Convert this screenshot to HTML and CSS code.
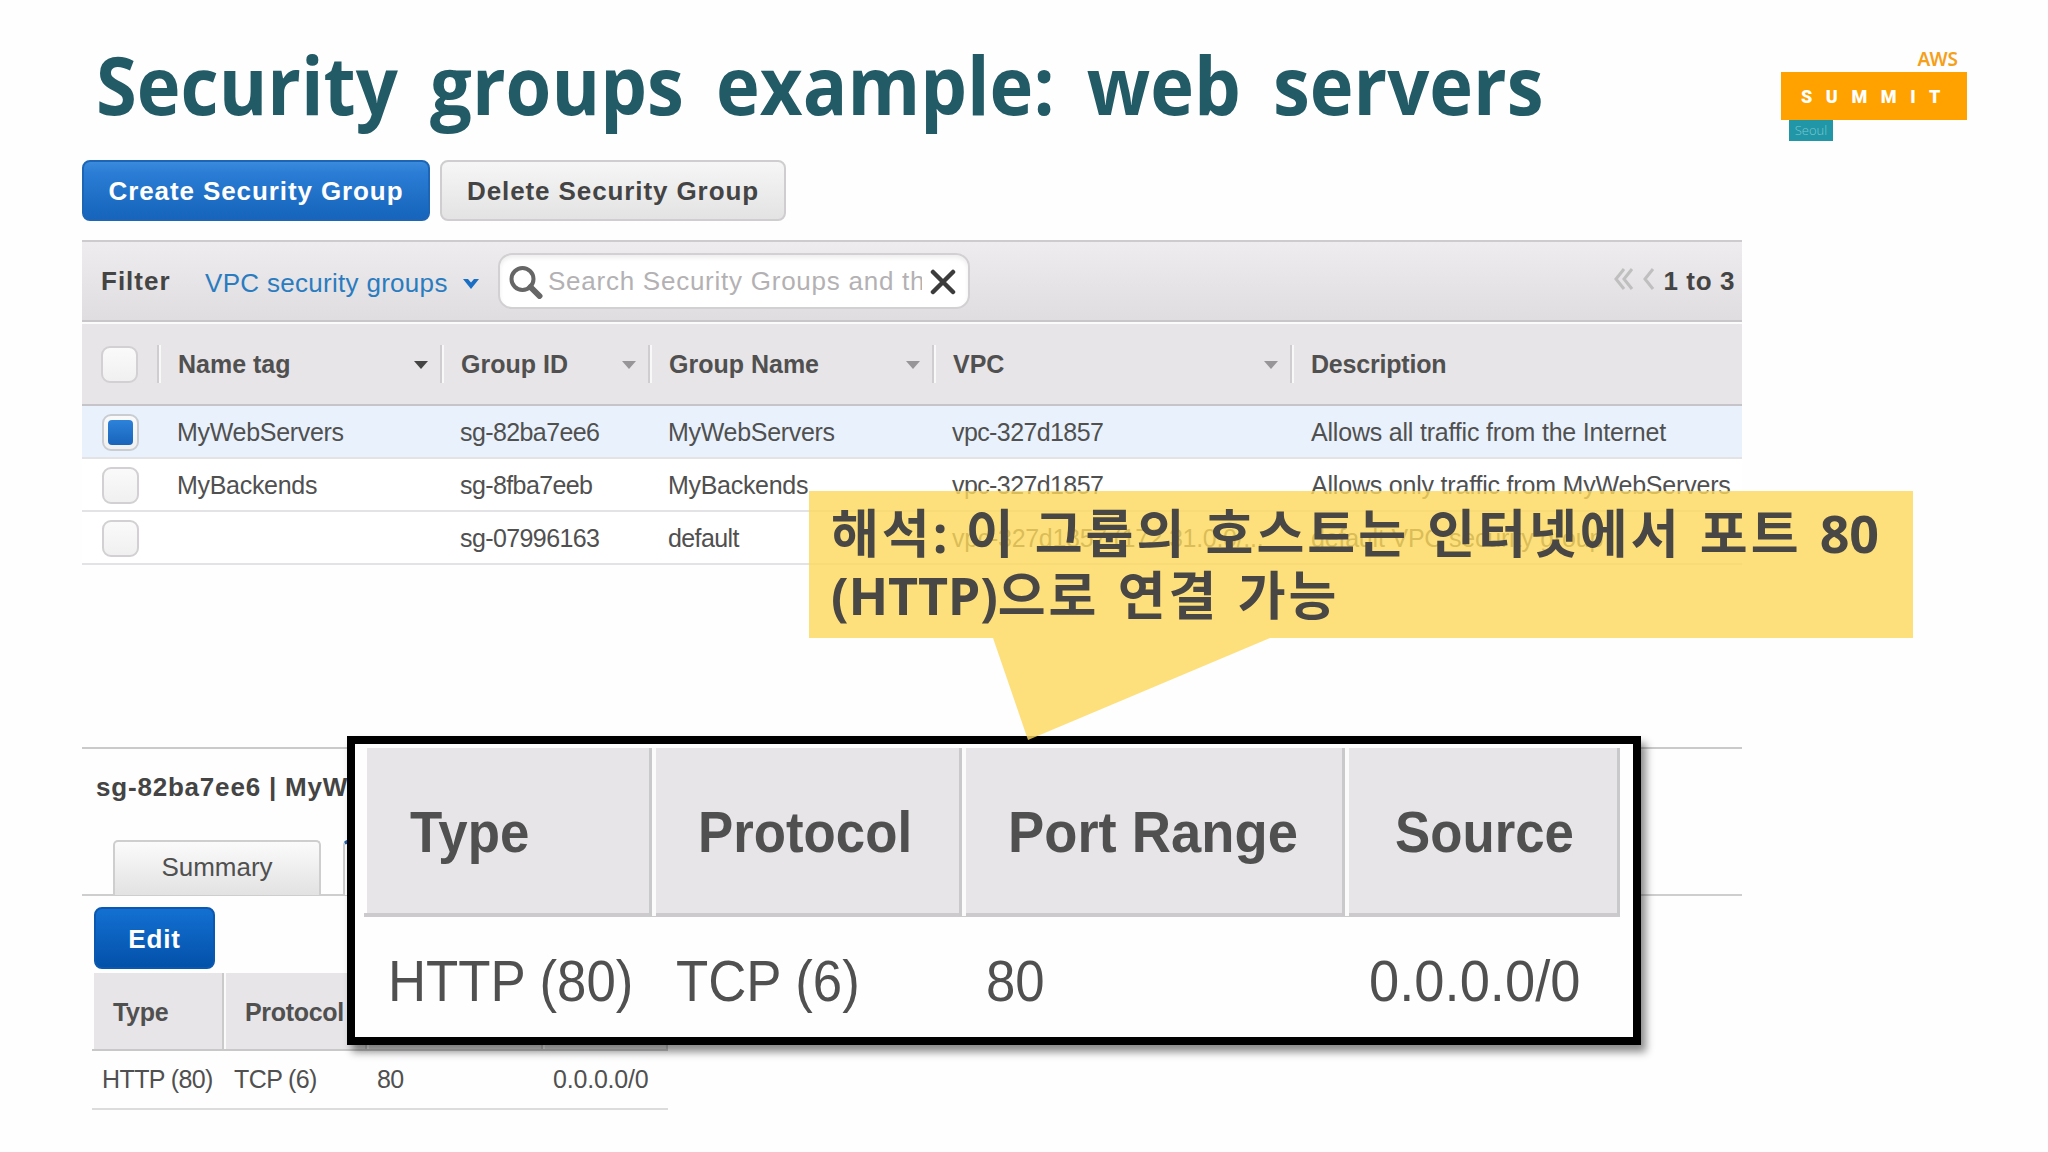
FILE: index.html
```html
<!DOCTYPE html>
<html lang="ko">
<head>
    <meta charset="UTF-8">
    <meta name="viewport" content="width=device-width, initial-scale=1.0">
    <title>Security groups example: web servers</title>
    <link rel="stylesheet" href="styles.css">
</head>
<body>
    <header class="slide-header">
        <h1>Security groups example: web servers</h1>
        <div class="logo">
            <span class="logo-aws">AWS</span>
            <span class="logo-summit">SUMMIT</span>
            <span class="logo-city">Seoul</span>
        </div>
    </header>

    <main class="console">
        <div class="actions">
            <button class="btn btn-primary">Create Security Group</button>
            <button class="btn btn-default">Delete Security Group</button>
        </div>

        <div class="filter-bar">
            <span class="filter-label">Filter</span>
            <span class="filter-link">VPC security groups</span>
            <svg class="chevron" width="16" height="12" viewBox="0 0 16 12"><path d="M0 1h5l3 3.500 3-3.500h5L8 11z" fill="#1a6fc4"/></svg>
            <div class="search">
                <svg width="34" height="34" viewBox="0 0 34 34" fill="none" stroke="#666"><circle cx="13.500" cy="14" r="11" stroke-width="4"/><path d="M21.500 22l9 9" stroke-width="6" stroke-linecap="round"/></svg>
                <span class="search-text">Search Security Groups and th</span>
                <svg width="26" height="26" viewBox="0 0 26 26" fill="none" stroke="#3c3c3c" stroke-width="4.500" stroke-linecap="round"><path d="M3 3l20 20M23 3L3 23"/></svg>
            </div>
            <div class="pager">
                <svg width="42" height="22" viewBox="0 0 42 22" fill="none" stroke="#bfbfbf" stroke-width="3"><path d="M11 1L3 11l8 10M19 1l-8 10 8 10M40 1l-8 10 8 10"/></svg>
                <span>1 to 3</span>
            </div>
        </div>

        <div class="grid grid-head">
            <div class="check-cell"><span class="checkbox"></span></div>
            <div class="sort active">Name tag</div>
            <div class="sort">Group ID</div>
            <div class="sort">Group Name</div>
            <div class="sort">VPC</div>
            <div>Description</div>
        </div>
        <div class="grid row selected">
            <div class="check-cell"><span class="checkbox checked"></span></div>
            <div>MyWebServers</div>
            <div class="tight">sg-82ba7ee6</div>
            <div>MyWebServers</div>
            <div class="tight">vpc-327d1857</div>
            <div class="desc">Allows all traffic from the Internet</div>
        </div>
        <div class="grid row">
            <div class="check-cell"><span class="checkbox"></span></div>
            <div>MyBackends</div>
            <div class="tight">sg-8fba7eeb</div>
            <div>MyBackends</div>
            <div class="tight">vpc-327d1857</div>
            <div class="desc">Allows only traffic from MyWebServers</div>
        </div>
        <div class="grid row">
            <div class="check-cell"><span class="checkbox"></span></div>
            <div></div>
            <div class="tight">sg-07996163</div>
            <div class="tight">default</div>
            <div>vpc-327d1857 (172.31.0.0/...</div>
            <div class="desc">default VPC security group</div>
        </div>

        <section class="detail">
            <div class="detail-title">sg-82ba7ee6 | MyWebServers</div>
            <div class="tabs">
                <span class="tab">Summary</span>
                <span class="tab tab-active"></span>
            </div>
            <button class="btn btn-edit">Edit</button>
            <div class="rules rules-head">
                <div>Type</div><div>Protocol</div><div></div><div></div>
            </div>
            <div class="rules rules-row">
                <div>HTTP (80)</div><div>TCP (6)</div><div>80</div><div class="source">0.0.0.0/0</div>
            </div>
        </section>
    </main>

    <!-- Enlarged copy of the inbound rules -->
    <div class="zoom-box">
        <div class="zoom-head">
            <div><span>Type</span></div>
            <div><span>Protocol</span></div>
            <div><span class="wide">Port Range</span></div>
            <div><span>Source</span></div>
        </div>
        <div class="zoom-row">
            <div><span>HTTP (80)</span></div>
            <div><span>TCP (6)</span></div>
            <div><span>80</span></div>
            <div><span class="wide">0.0.0.0/0</span></div>
        </div>
    </div>

    <div class="callout">
        <p>해석<span class="latin">:</span> 이 그룹의 호스트는 인터넷에서 포트 <span class="latin">80</span><br><span class="latin">(HTTP)</span>으로 연결 가능</p>
    </div>
</body>
</html>
```

FILE: styles.css
```css
* {
    box-sizing: border-box;
}
body {
    margin: 0;
    width: 2048px;
    height: 1152px;
    position: relative;
    overflow: hidden;
    background: #fefefe;
    color: #505050;
    font-family: "Liberation Sans", Arial, sans-serif;
    font-size: 25px;
}

/* Header */
.slide-header {
    display: flex;
    justify-content: space-between;
    height: 160px;
    padding: 23px 81px 0 96px;
}
h1 {
    margin: 0;
    font-family: "Open Sans", "Noto Sans", sans-serif;
    font-size: 80px;
    font-weight: bold;
    line-height: 121px;
    color: #225a66;
    white-space: nowrap;
    word-spacing: 14px;
    transform: scaleX(0.926);
    transform-origin: left;
}
.logo {
    display: flex;
    flex-direction: column;
    width: 186px;
    padding-top: 25px;
}
.logo-aws {
    align-self: flex-end;
    height: 24px;
    padding-right: 9px;
    font: 600 19px/22px "Noto Sans", sans-serif;
    color: #f5a01a;
}
.logo-summit {
    height: 48px;
    padding-left: 20px;
    background: #ffa200;
    color: #fff;
    font: 900 18px/50px Roboto, sans-serif;
    letter-spacing: 13.6px;
}
.logo-city {
    width: 44px;
    height: 21px;
    margin-left: 8px;
    background: #2096a6;
    color: #7cc8d0;
    font: 300 13px/20px "Open Sans", sans-serif;
    text-align: center;
}

/* Console */
.console {
    width: 1660px;
    margin-left: 82px;
}
.actions {
    display: flex;
    gap: 10px;
    height: 80px;
}
.btn {
    height: 61px;
    padding: 2px 0 0;
    border-radius: 8px;
    font-family: inherit;
    font-size: 26px;
    font-weight: bold;
    letter-spacing: 0.9px;
}
.btn-primary {
    width: 348px;
    border: 2px solid #1c66b5;
    background: linear-gradient(#3a8bdd, #2a7cd4 20%, #1664bb);
    color: #fff;
}
.btn-default {
    width: 346px;
    border: 2px solid #cfcdcf;
    background: linear-gradient(#f7f6f7, #e4e3e4);
    color: #444;
}
.filter-bar {
    display: flex;
    align-items: center;
    height: 82px;
    padding: 0 7px 0 19px;
    border-top: 2px solid #cdcbcd;
    border-bottom: 2px solid #c8c6c8;
    background: linear-gradient(#eeecee, #dfdddf);
    font-size: 26px;
}
.filter-label {
    width: 104px;
    padding-top: 1px;
    font-weight: bold;
    letter-spacing: 1px;
    color: #444;
}
.filter-link {
    width: 258px;
    padding-top: 5px;
    color: #2a7cc0;
    letter-spacing: 0.3px;
    white-space: nowrap;
}
.chevron {
    margin-top: 5px;
}
.search {
    display: flex;
    align-items: center;
    width: 472px;
    height: 56px;
    margin-left: 19px;
    padding: 0 11px 0 9px;
    border: 2px solid #d2d0d2;
    border-radius: 14px;
    background: #fff;
    box-shadow: inset 0 3px 4px #eee;
}
.search-text {
    width: 374px;
    margin: 1px 8px 0 5px;
    overflow: hidden;
    white-space: nowrap;
    color: #b3b1b3;
    letter-spacing: 0.75px;
}
.search svg {
    margin-top: 2px;
}
.pager {
    display: flex;
    align-items: center;
    gap: 8px;
    margin-left: auto;
    font-weight: bold;
    letter-spacing: 0.6px;
    color: #444;
}
.pager svg {
    margin-top: -4px;
}

.grid {
    display: grid;
    grid-template-columns: 76px 283px 208px 284px 358px 1fr;
    align-items: center;
    white-space: nowrap;
}
.grid-head {
    height: 84px;
    border-top: 2px solid #fbfbfb;
    border-bottom: 2px solid #c6c4c8;
    background: #e7e5e7;
    font-weight: bold;
}
.grid-head > div:not(.check-cell) {
    position: relative;
    left: -1px;
    display: flex;
    align-items: center;
    height: 38px;
    padding-left: 19px;
    border-left: 2px solid #cfcdcf;
    box-shadow: inset 2px 0 #f8f8f8;
}
.grid-head > div:last-child {
    letter-spacing: -0.2px;
}
.sort::after {
    content: "";
    margin: 2px 12px 0 auto;
    border: 7px solid transparent;
    border-top: 8px solid #979597;
    border-bottom: 0;
}
.sort.active::after {
    border-top-color: #444;
}
.check-cell {
    padding-left: 19px;
}
.checkbox {
    display: block;
    width: 37px;
    height: 37px;
    border: 2px solid #d2d0d2;
    border-radius: 9px;
    background: linear-gradient(#fbfafb, #f1f0f1);
}
.checked {
    border-color: #c9cdd2;
    padding: 4px;
}
.checked::before {
    content: "";
    display: block;
    width: 25px;
    height: 25px;
    border-radius: 4px;
    background: linear-gradient(#2d82da, #1864ba);
}
.row {
    height: 53px;
    border-bottom: 2px solid #e3e2e4;
    background: #fff;
    letter-spacing: -0.3px;
}
.row > div {
    padding: 1px 0 0 19px;
}
.row .check-cell {
    padding-left: 20px;
}
.row .tight {
    letter-spacing: -0.6px;
}
.row .desc {
    padding-left: 20px;
    letter-spacing: -0.2px;
}
.selected {
    background: #e9f2fc;
}

/* Detail pane */
.detail {
    margin-top: 182px;
    border-top: 2px solid #cbcacb;
}
.detail-title {
    height: 91px;
    padding: 23px 0 0 14px;
    font-size: 26px;
    font-weight: bold;
    letter-spacing: 0.8px;
    color: #444;
}
.tabs {
    display: flex;
    gap: 22px;
    height: 56px;
    padding-left: 31px;
    border-bottom: 2px solid #cfcecf;
}
.tab {
    width: 208px;
    height: 55px;
    border: 2px solid #cfcecf;
    border-bottom: 0;
    border-radius: 5px 5px 0 0;
    background: linear-gradient(#fbfbfb, #e3e2e3);
    font-size: 26px;
    line-height: 51px;
    text-align: center;
}
.tab-active {
    border-top: 4px solid #1f63b0;
    background: #fff;
}
.btn-edit {
    display: block;
    width: 121px;
    height: 62px;
    margin: 11px 0 4px 12px;
    border: 2px solid #0a58b0;
    background: linear-gradient(#1370d2, #0351a9);
    color: #fff;
}
.rules {
    display: grid;
    grid-template-columns: 132px 143px 176px 125px;
    align-items: center;
    width: 576px;
    margin-left: 10px;
}
.rules-head {
    height: 78px;
    border-bottom: 2px solid #c9c8c9;
    background: linear-gradient(to right, #fefefe 2px, #e7e5e7 2px);
    font-weight: bold;
    letter-spacing: -0.3px;
}
.rules-head > div {
    height: 76px;
    padding-left: 21px;
    border-right: 2px solid #cbcacb;
    line-height: 78px;
    box-shadow: 2px 0 #fafafa;
}
.rules-row {
    height: 59px;
    border-bottom: 2px solid #dddcdd;
    letter-spacing: -0.6px;
}
.rules-row > div {
    padding-left: 10px;
}
.rules-row .source {
    letter-spacing: -0.2px;
}

/* Enlarged table */
.zoom-box {
    position: absolute;
    left: 347px;
    top: 736px;
    width: 1294px;
    height: 309px;
    padding: 4px 13px 0 9px;
    border: 8px solid #000;
    background: #fefefe;
    box-shadow: 5px 7px 8px rgba(0, 0, 0, 0.45);
    font-size: 58px;
    white-space: nowrap;
}
.zoom-head,
.zoom-row {
    display: grid;
    grid-template-columns: 288px 310px 383px 275px;
}
.zoom-head {
    height: 169px;
    border-bottom: 4px solid #cccacc;
    background: linear-gradient(to right, #fefefe 3px, #e7e5e7 3px);
    font-weight: bold;
}
.zoom-head > div {
    padding-left: 46px;
    border-right: 3px solid #c9c8ca;
    box-shadow: 4px 0 #fbfbfb;
    line-height: 168px;
}
.zoom-head > div:last-child {
    box-shadow: none;
    padding-left: 50px;
}
.zoom-row {
    line-height: 127px;
}
.zoom-row > div {
    padding-left: 24px;
}
.zoom-box span {
    display: inline-block;
    transform: scaleX(0.91);
    transform-origin: left;
}
.zoom-box .wide {
    transform: scaleX(0.937);
}

/* Callout */
.callout {
    position: absolute;
    left: 809px;
    top: 491px;
    width: 1104px;
    height: 249px;
    padding: 11px 0 0 22px;
    background: rgba(252, 216, 90, 0.8);
    clip-path: polygon(0 0, 100% 0, 100% 147px, 461px 147px, 219px 249px, 184px 147px, 0 147px);
}
.callout p {
    margin: 0;
    font: bold 52px/62px "Open Sans", "Noto Sans CJK KR", sans-serif;
    letter-spacing: 3px;
    word-spacing: 1.8px;
    color: #494745;
    white-space: nowrap;
}
.callout .latin {
    letter-spacing: -0.2px;
}
```
